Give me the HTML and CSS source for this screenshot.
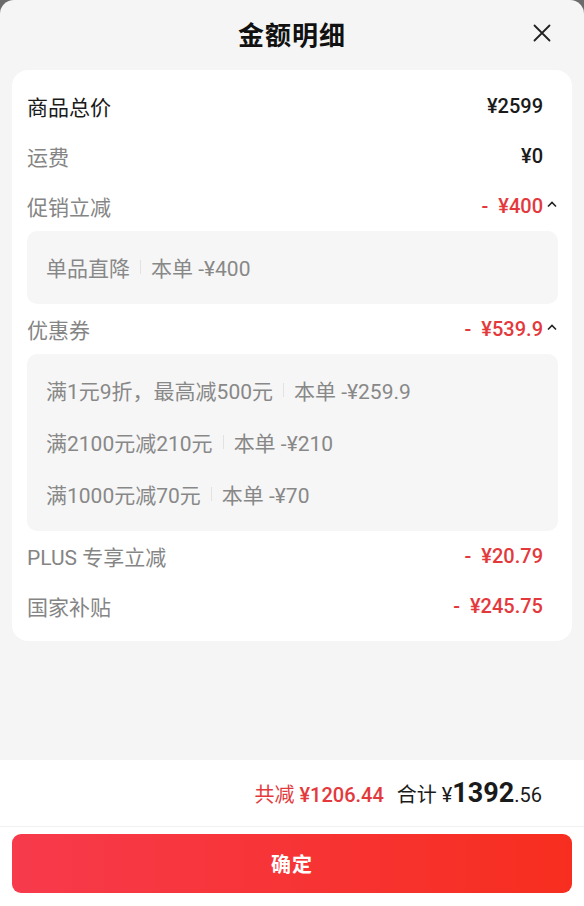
FILE: index.html
```html
<!DOCTYPE html>
<html lang="zh-CN">
<head>
    <meta charset="UTF-8">
    <meta name="viewport" content="width=device-width, initial-scale=1.0">
    <title>金额明细</title>
    <link rel="stylesheet" href="styles.css">
</head>
<body>
    <div class="sheet">
        <div class="header">
            <span></span>
            <h1 class="title">金额明细</h1>
            <button class="close" aria-label="关闭">
                <svg width="18" height="18" viewBox="0 0 18 18">
                    <path d="M1.5 1.5 L16.5 16.5 M16.5 1.5 L1.5 16.5" stroke="#222" stroke-width="1.8" fill="none" stroke-linecap="round"/>
                </svg>
            </button>
        </div>

        <div class="card">
            <div class="row">
                <span class="label dark">商品总价</span>
                <span class="val">¥2599</span>
            </div>
            <div class="row">
                <span class="label">运费</span>
                <span class="val">¥0</span>
            </div>
            <div class="row">
                <span class="label">促销立减</span>
                <span class="val red has-arrow">-&nbsp; ¥400<svg class="arrow" width="12" height="8" viewBox="0 0 12 8"><path d="M2 6.5 L6 2.5 L10 6.5" stroke="#222" stroke-width="1.6" fill="none"/></svg></span>
            </div>
            <div class="sub">
                <div class="sub-line">单品直降<i class="sep"></i>本单 -¥400</div>
            </div>
            <div class="row">
                <span class="label">优惠券</span>
                <span class="val red has-arrow">-&nbsp; ¥539.9<svg class="arrow" width="12" height="8" viewBox="0 0 12 8"><path d="M2 6.5 L6 2.5 L10 6.5" stroke="#222" stroke-width="1.6" fill="none"/></svg></span>
            </div>
            <div class="sub">
                <div class="sub-line">满1元9折，最高减500元<i class="sep"></i>本单 -¥259.9</div>
                <div class="sub-line">满2100元减210元<i class="sep"></i>本单 -¥210</div>
                <div class="sub-line">满1000元减70元<i class="sep"></i>本单 -¥70</div>
            </div>
            <div class="row">
                <span class="label">PLUS 专享立减</span>
                <span class="val red">-&nbsp; ¥20.79</span>
            </div>
            <div class="row">
                <span class="label">国家补贴</span>
                <span class="val red">-&nbsp; ¥245.75</span>
            </div>
        </div>

        <div class="footer">
            <div class="summary">
                <span class="saved">共减 <b>¥1206.44</b></span>
                <span class="total">合计 ¥<b class="big">1392</b>.56</span>
            </div>
            <button class="confirm">确定</button>
        </div>
    </div>
</body>
</html>
```

FILE: styles.css
```css
* {
    box-sizing: border-box;
}

body {
    margin: 0;
    background: #6b6b6b;
    font-family: "Roboto", "Noto Sans CJK SC", sans-serif;
}

.sheet {
    height: 906px;
    display: flex;
    flex-direction: column;
    background: #f5f5f5;
    border-radius: 14px 14px 0 0;
    overflow: hidden;
}

/* header */
.header {
    height: 66px;
    display: grid;
    grid-template-columns: 1fr auto 1fr;
    align-items: center;
    padding: 0 33px;
}

.title {
    margin: 0;
    font-size: 26px;
    font-weight: 700;
    color: #111;
    letter-spacing: 1px;
}

.close {
    justify-self: end;
    border: 0;
    background: none;
    padding: 0;
    width: 18px;
    height: 18px;
}

/* detail card */
.card {
    margin: 4px 12px 0;
    background: #fff;
    border-radius: 16px;
    padding: 11px 14px 10px 15px;
}

.row {
    height: 50px;
    display: flex;
    justify-content: space-between;
    align-items: center;
}

.label {
    font-size: 21px;
    color: #858585;
}

.label.dark {
    color: #1a1a1a;
}

.val {
    font-size: 20px;
    font-weight: 500;
    color: #1a1a1a;
    margin-right: 15px;
}

.val.red {
    color: #e4393c;
}

.val.has-arrow {
    margin-right: 0;
    display: flex;
    align-items: center;
}

.arrow {
    margin-left: 3px;
    margin-top: -4px;
}

.sub {
    background: #f6f6f6;
    border-radius: 10px;
    padding: 10px 19px 11px;
}

.sub-line {
    height: 52px;
    display: flex;
    align-items: center;
    font-size: 21px;
    color: #888;
}

.sep {
    display: inline-block;
    width: 1px;
    height: 14px;
    background: #e2e2e2;
    margin: 0 10px;
}

/* footer */
.footer {
    margin-top: auto;
    background: #fff;
}

.summary {
    height: 67px;
    display: flex;
    justify-content: flex-end;
    align-items: center;
    gap: 13px;
    padding-right: 42px;
    border-bottom: 1px solid #f0f0f0;
    font-size: 20px;
}

.saved {
    color: #e4393c;
}

.saved b {
    font-weight: 500;
}

.total {
    color: #1a1a1a;
}

.total .big {
    font-size: 27px;
    font-weight: 700;
}

.confirm {
    display: block;
    width: 560px;
    height: 59px;
    margin: 7px 12px 13px;
    border: 0;
    border-radius: 9px;
    background: linear-gradient(90deg, #f73a4c, #f72e1f);
    color: #fff;
    font-family: "Noto Sans CJK SC", sans-serif;
    font-size: 20px;
    font-weight: 700;
    letter-spacing: 1px;
}
```
